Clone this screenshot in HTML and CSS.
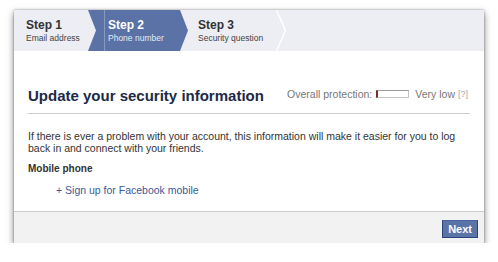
FILE: index.html
```html
<!DOCTYPE html>
<html>
<head>
<meta charset="utf-8">
<link rel="stylesheet" href="styles.css">
</head>
<body>
<div class="card">
  <div class="steps">
    <div class="step s1">
      <div class="step-title">Step 1</div>
      <div class="step-sub">Email address</div>
    </div>
    <div class="step s2">
      <div class="s2-inner">
        <div class="step-title">Step 2</div>
        <div class="step-sub">Phone number</div>
      </div>
    </div>
    <div class="step s3">
      <div class="step-title">Step 3</div>
      <div class="step-sub">Security question</div>
    </div>
    <svg class="chev" width="11" height="41" viewBox="0 0 11 41"><polyline points="0.5,0 9.5,20.5 0.5,41" fill="none" stroke="#ffffff" stroke-width="1.4"/></svg>
    <div class="steps-rest"></div>
  </div>
  <div class="content">
    <div class="title-row">
      <h1 class="title">Update your security information</h1>
      <div class="protection">
        <span class="prot-label">Overall protection:</span>
        <span class="meter"></span>
        <span class="prot-level">Very low</span>
        <span class="help">[?]</span>
      </div>
    </div>
    <p class="intro">If there is ever a problem with your account, this information will make it easier for you to log back in and connect with your friends.</p>
    <div class="label">Mobile phone</div>
    <a class="link" href="#">+ Sign up for Facebook mobile</a>
  </div>
  <div class="footer">
    <button class="next">Next</button>
  </div>
</div>
</body>
</html>
```
FILE: styles.css
```css
html, body {
  margin: 0;
  padding: 0;
  background: #ffffff;
}
body {
  font-family: "Liberation Sans", Arial, sans-serif;
  color: #333333;
  padding: 10px 14px 0 14px;
}
.card {
  width: 470px;
  height: 233px;
  background: #ffffff;
  box-shadow: 0 3px 7px rgba(0, 0, 0, 0.5), 0 0 2px rgba(0, 0, 0, 0.35);
  display: flex;
  flex-direction: column;
}
.steps {
  display: flex;
  height: 41px;
  background: #eceef3;
}
.step {
  box-sizing: border-box;
  height: 41px;
}
.step-title {
  font-size: 12px;
  font-weight: bold;
  line-height: 14px;
  padding-top: 8px;
  color: #333333;
}
.step-sub {
  font-size: 8.5px;
  line-height: 13px;
  color: #444444;
}
.s1 {
  width: 74px;
  padding-left: 12px;
}
.s2 {
  width: 100px;
  background: #5a72a6;
  clip-path: polygon(0 0, 92px 0, 100px 50%, 92px 100%, 0 100%, 8px 50%);
  padding-left: 16px;
}
.s2-inner {
  height: 41px;
  border-left: 1px solid rgba(255, 255, 255, 0.28);
  padding-left: 3px;
}
.s2 .step-title {
  color: #ffffff;
}
.s2 .step-sub {
  color: #e6eaf2;
}
.s3 {
  width: 88px;
  padding-left: 10px;
}
.chev {
  display: block;
  flex: none;
}
.steps-rest {
  flex: 1;
}
.content {
  flex: 1;
  padding: 0 14px;
}
.title-row {
  display: flex;
  justify-content: space-between;
  align-items: center;
  padding-top: 36px;
  padding-bottom: 8px;
  border-bottom: 1px solid #cccccc;
}
.title {
  margin: 0;
  font-size: 15px;
  line-height: 18px;
  font-weight: bold;
  color: #1c2a47;
}
.protection {
  display: flex;
  align-items: center;
  font-size: 10.5px;
  line-height: 14px;
  color: #777777;
  margin-top: -4px;
  margin-right: 2px;
}
.meter {
  display: inline-block;
  box-sizing: border-box;
  width: 33px;
  height: 8px;
  margin: 0 6px 0 4px;
  border: 1px solid #c4c4c4;
  border-top-color: #9a9a9a;
  border-left: 2px solid #7a2b2b;
  background: #ffffff;
}
.help {
  margin-left: 3px;
  font-size: 9px;
  color: #aaaaaa;
}
.intro {
  margin: 16px 0 0 0;
  font-size: 10.5px;
  line-height: 12px;
  color: #333333;
}
.label {
  margin-top: 9px;
  font-size: 10px;
  line-height: 12px;
  font-weight: bold;
  color: #333333;
}
.link {
  display: block;
  margin-top: 9px;
  padding-left: 28px;
  font-size: 10.5px;
  line-height: 12px;
  color: #3b5998;
  text-decoration: none;
}
.footer {
  height: 32px;
  box-sizing: border-box;
  border-top: 1px solid #cccccc;
  background: #f2f2f2;
  display: flex;
  justify-content: flex-end;
  padding: 8px 6px 0 0;
}
.next {
  height: 18px;
  padding: 0 5px;
  margin: 0;
  font-family: "Liberation Sans", Arial, sans-serif;
  font-size: 11px;
  font-weight: bold;
  color: #ffffff;
  background: #5b74a8;
  border: 1px solid #29447e;
  border-top-color: #4a62a0;
  line-height: 16px;
  cursor: pointer;
}
```
